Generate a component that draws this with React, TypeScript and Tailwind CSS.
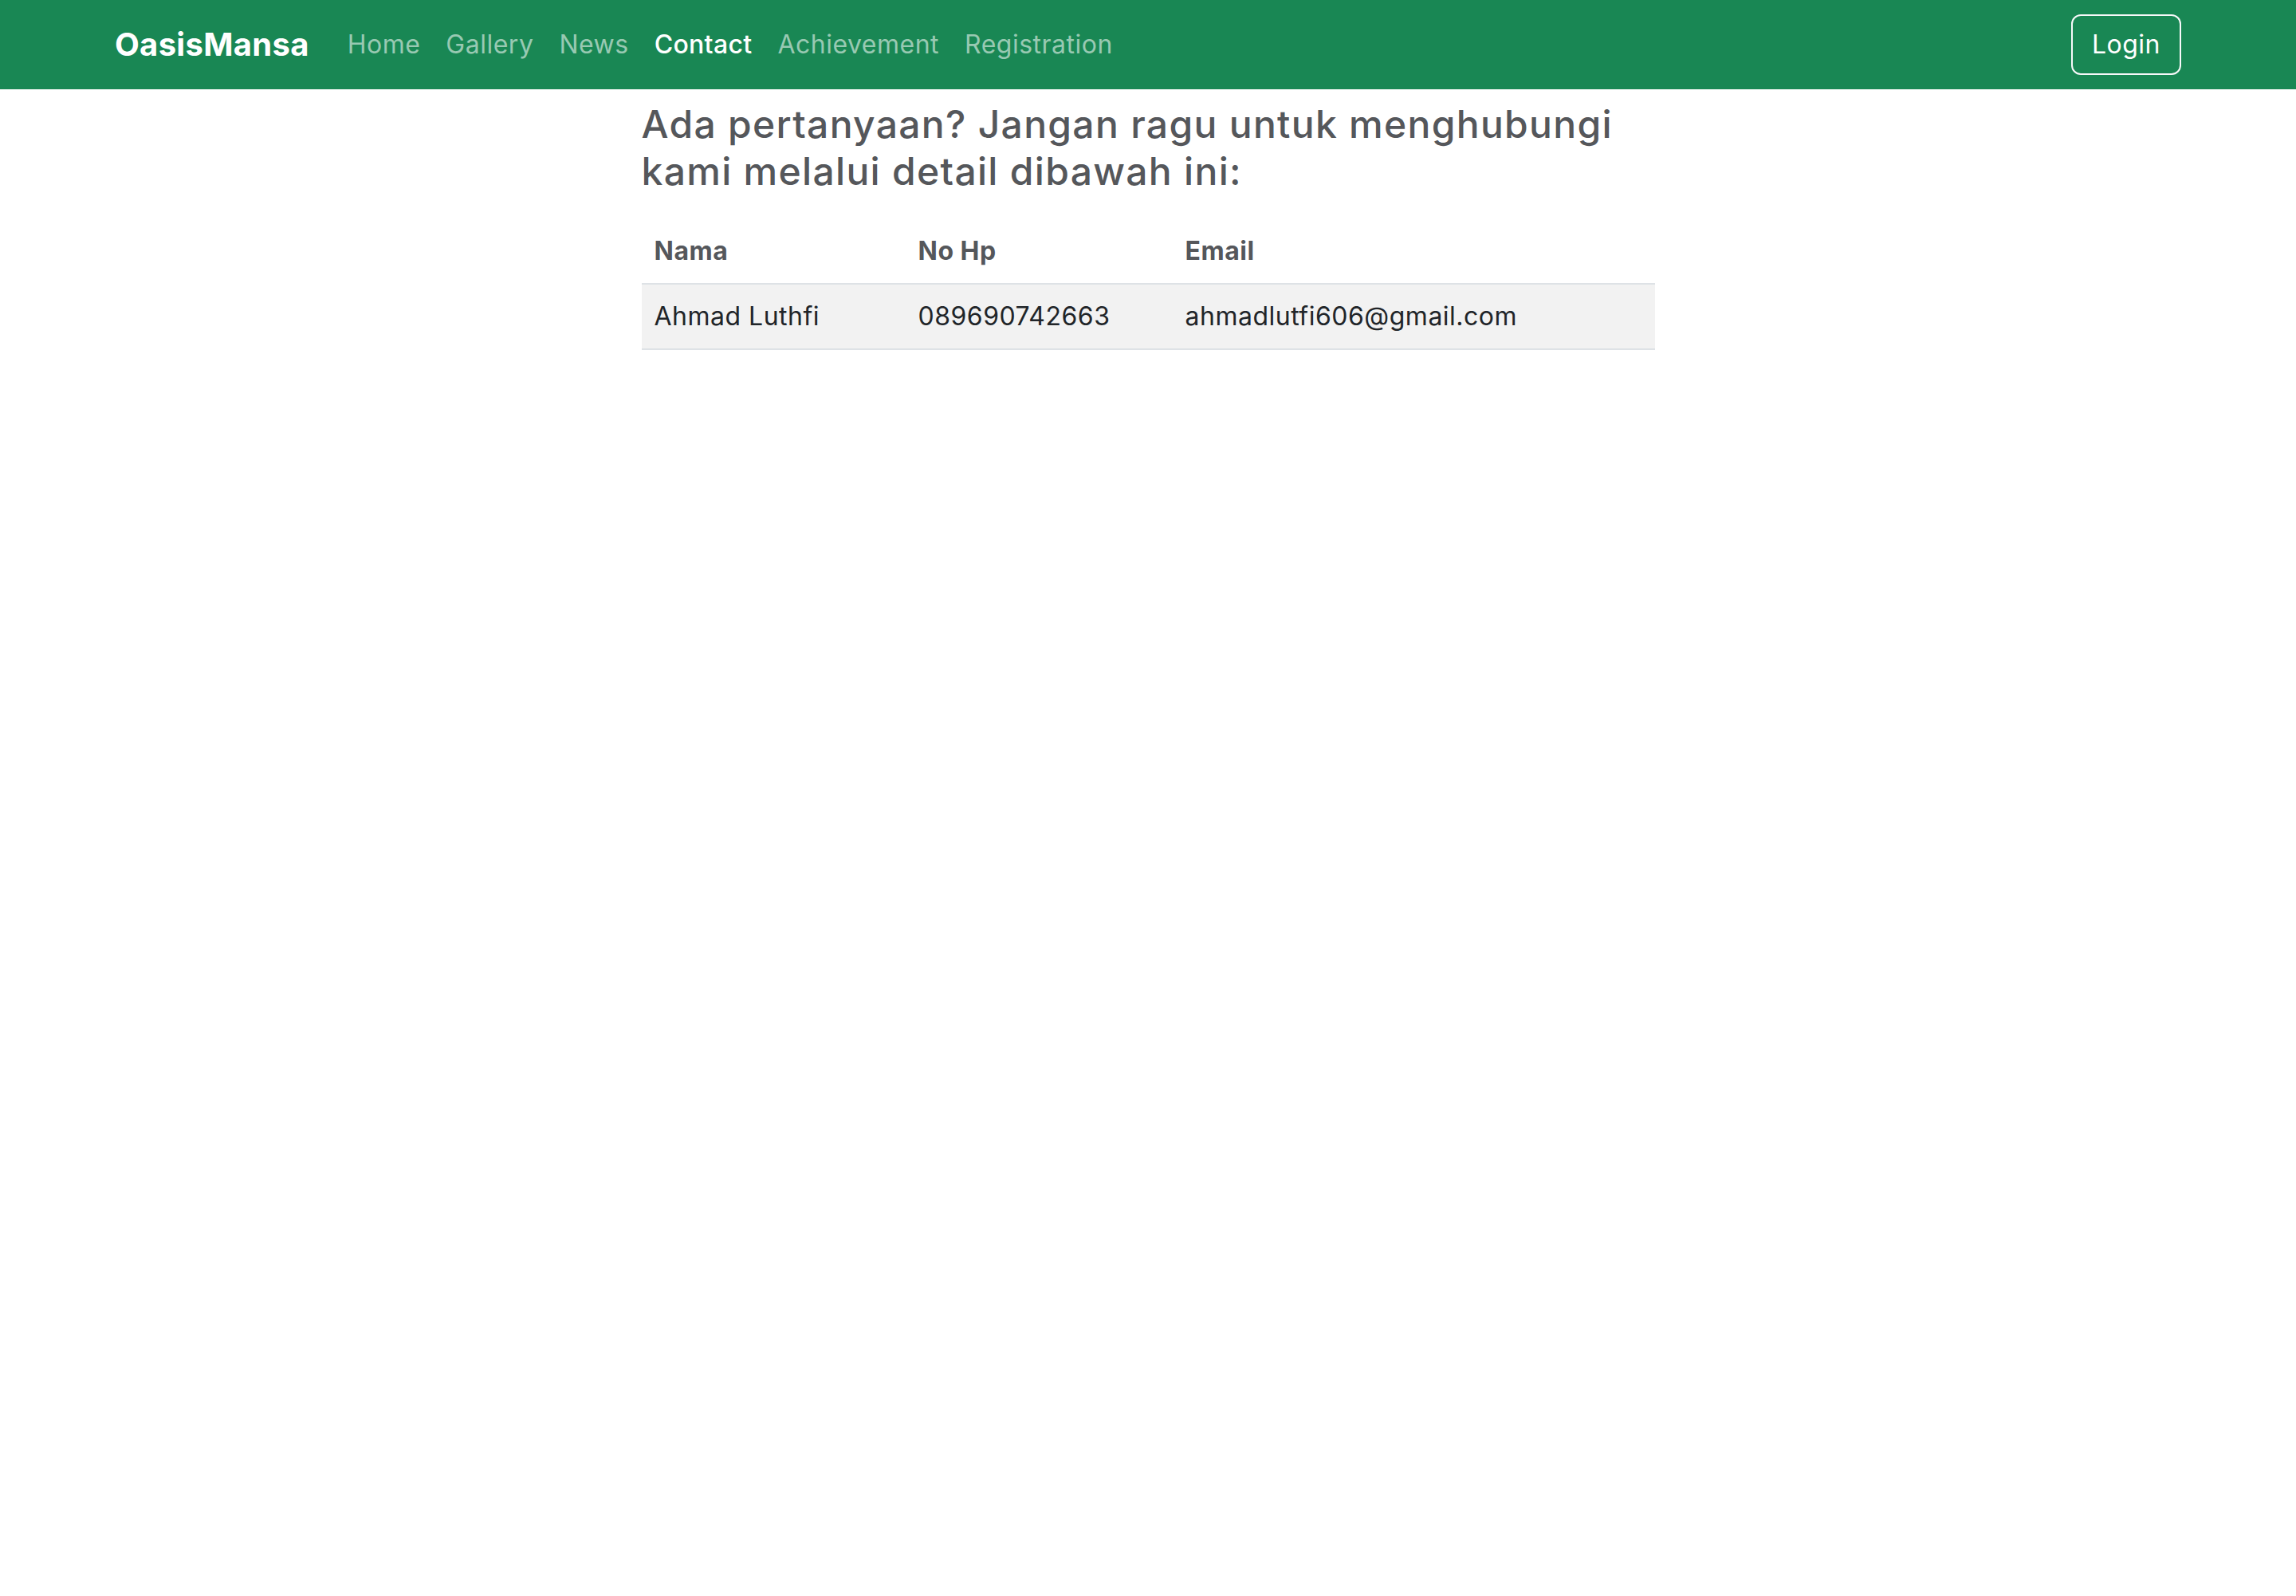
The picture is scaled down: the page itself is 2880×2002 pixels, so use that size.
const links = [
  { label: "Home", active: false },
  { label: "Gallery", active: false },
  { label: "News", active: false },
  { label: "Contact", active: true },
  { label: "Achievement", active: false },
  { label: "Registration", active: false },
];

const contacts = [
  { nama: "Ahmad Luthfi", hp: "089690742663", email: "ahmadlutfi606@gmail.com" },
];

export default function App() {
  return (
    <div className="min-h-screen bg-white font-['Inter',sans-serif]">
      {/* ── Navbar ─────────────────────────────────────────── */}
      <nav className="h-[112px] bg-[#198754]">
        <div className="flex h-full items-center px-[144px]">
          <a href="#" className="mr-[32px] text-[40px] font-bold tracking-[0.3px] text-white">
            OasisMansa
          </a>
          <ul className="flex items-center">
            {links.map((link) => (
              <li key={link.label}>
                <a
                  href="#"
                  className={
                    link.active
                      ? "px-[16px] text-[32px] font-medium tracking-[0.3px] text-white"
                      : "px-[16px] text-[32px] tracking-[0.5px] text-[#98c9b2]"
                  }
                >
                  {link.label}
                </a>
              </li>
            ))}
          </ul>
          <button className="ml-auto h-[76px] rounded-[12px] border-2 border-[#f8f9fa] px-[24px] text-[32px] tracking-[0.5px] text-white">
            Login
          </button>
        </div>
      </nav>

      {/* ── Contact ────────────────────────────────────────── */}
      <main className="mx-auto w-[1271px] pt-[14px]">
        <h2 className="text-[48px] font-medium leading-[59px] tracking-[1.3px] text-[#55575b]">
          Ada pertanyaan? Jangan ragu untuk menghubungi kami melalui detail
          dibawah ini:
        </h2>

        <table className="mt-[30px] w-full text-left text-[32px] tracking-[0.5px]">
          <thead>
            <tr className="h-[82px] border-b-2 border-[#dee2e6]">
              <th className="w-[331px] px-[16px] font-bold text-[#55575b]">Nama</th>
              <th className="w-[335px] px-[16px] font-bold text-[#55575b]">No Hp</th>
              <th className="px-[16px] font-bold text-[#55575b]">Email</th>
            </tr>
          </thead>
          <tbody>
            {contacts.map((c) => (
              <tr key={c.email} className="h-[82px] border-b-2 border-[#dee2e6] bg-[#f2f2f2] text-[#212529]">
                <td className="px-[16px]">{c.nama}</td>
                <td className="px-[16px]">{c.hp}</td>
                <td className="px-[16px]">{c.email}</td>
              </tr>
            ))}
          </tbody>
        </table>
      </main>
    </div>
  );
}
